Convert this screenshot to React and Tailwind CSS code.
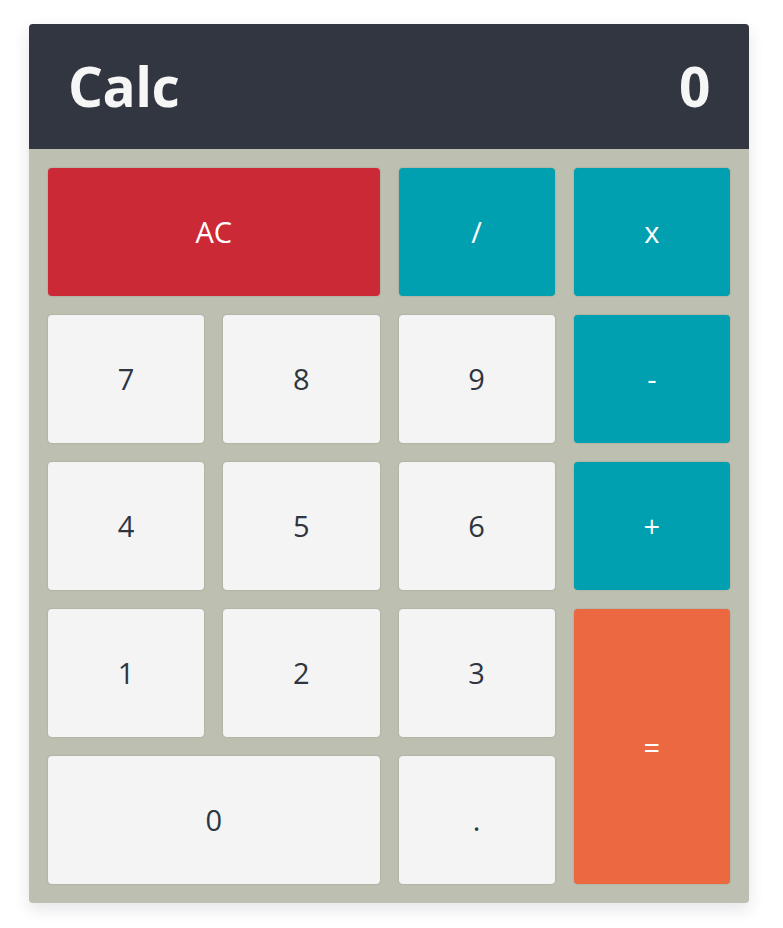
const keys = [
  { label: "AC", cls: "col-span-2 bg-[#cc2936] text-white" },
  { label: "/", cls: "bg-[#00a0b0] text-white" },
  { label: "x", cls: "bg-[#00a0b0] text-white" },
  { label: "7", cls: "bg-[#f4f4f4] text-[#2d3541]" },
  { label: "8", cls: "bg-[#f4f4f4] text-[#2d3541]" },
  { label: "9", cls: "bg-[#f4f4f4] text-[#2d3541]" },
  { label: "-", cls: "bg-[#00a0b0] text-white" },
  { label: "4", cls: "bg-[#f4f4f4] text-[#2d3541]" },
  { label: "5", cls: "bg-[#f4f4f4] text-[#2d3541]" },
  { label: "6", cls: "bg-[#f4f4f4] text-[#2d3541]" },
  { label: "+", cls: "bg-[#00a0b0] text-white" },
  { label: "1", cls: "bg-[#f4f4f4] text-[#2d3541]" },
  { label: "2", cls: "bg-[#f4f4f4] text-[#2d3541]" },
  { label: "3", cls: "bg-[#f4f4f4] text-[#2d3541]" },
  { label: "=", cls: "row-span-2 bg-[#eb6841] text-white" },
  { label: "0", cls: "col-span-2 bg-[#f4f4f4] text-[#2d3541]" },
  { label: ".", cls: "bg-[#f4f4f4] text-[#2d3541]" },
];

export default function App() {
  return (
    <div className="min-h-screen bg-white pt-6 font-['Open_Sans',sans-serif]">
      <div className="ml-[29px] w-[720px] overflow-hidden rounded bg-[#bdbfb0] shadow-[0_6px_16px_rgba(30,30,60,0.12)]">
        {/* display */}
        <div className="flex h-[125px] items-center justify-between bg-[#323641] px-[39px] text-[55px] font-bold tracking-[-0.5px] text-[#f6f6f6]">
          <span>Calc</span>
          <span>0</span>
        </div>

        {/* keypad */}
        <div className="grid grid-cols-4 auto-rows-[128px] gap-[19px] p-[19px]">
          {keys.map((k) => (
            <button
              key={k.label}
              className={`flex items-center justify-center rounded-[4px] text-[29px] shadow-[0_0_2px_rgba(0,0,0,0.2)] ${k.cls}`}
            >
              {k.label}
            </button>
          ))}
        </div>
      </div>
    </div>
  );
}
